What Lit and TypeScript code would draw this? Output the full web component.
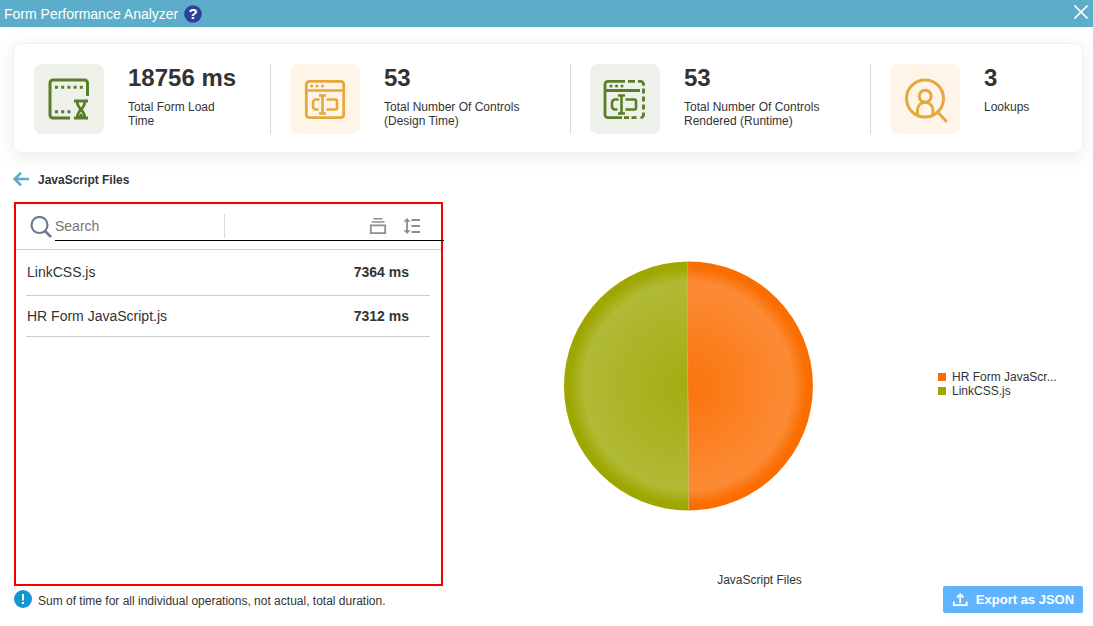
import { LitElement, html, css, svg } from "lit";
import { customElement, property, state } from "lit/decorators.js";

const textField = svg`
  <g fill="none" stroke="currentColor" stroke-width="2.6" stroke-linecap="butt" stroke-linejoin="round">
    <path d="M15.500 20.500h-3.500a3 3 0 0 0-3 3v4a3 3 0 0 0 3 3h2.500"/>
    <path d="M22.500 20.500h9a1.500 1.500 0 0 1 1.500 1.500v7a1.500 1.500 0 0 1-1.500 1.500h-9"/>
    <path d="M15 16.500h7M15 34.500h7M18.500 16.500v18"/>
  </g>`;

const icons = {
  load: svg`
    <path d="M22 40H5a3 3 0 0 1-3-3V5a3 3 0 0 1 3-3h31.500a3 3 0 0 1 3 3v13" fill="none" stroke="currentColor" stroke-width="3" stroke-linecap="butt"/>
    <path d="M7 9.200H35" stroke="currentColor" stroke-width="3" stroke-dasharray="3 3.200"/>
    <path d="M7 33.700H23" stroke="currentColor" stroke-width="3" stroke-dasharray="3 3.200"/>
    <path d="M26 23h14M26 40h14M29 23c0 5 3 6.500 3.500 8.500-.5 2-3.500 3.500-3.500 8.500M37 23c0 5-3 6.500-3.500 8.500 .5 2 3.500 3.500 3.500 8.500" fill="none" stroke="currentColor" stroke-width="2.800"/>
    <path d="M29 40l4-5 4 5z" fill="currentColor"/>`,
  design: svg`
    <rect x="2.300" y="3.300" width="37.400" height="36.400" rx="3" fill="none" stroke="currentColor" stroke-width="2.800"/>
    <path d="M2 12.500h37" stroke="currentColor" stroke-width="2.600"/>
    <g fill="currentColor"><circle cx="7.700" cy="8" r="1.600"/><circle cx="13" cy="8" r="1.600"/><circle cx="18.500" cy="8" r="1.600"/></g>
    <g transform="translate(0 1)">${textField}</g>`,
  runtime: svg`
    <path d="M21 3.300H4a3 3 0 0 0-3 3v30.400a3 3 0 0 0 3 3h14M1 12.500h35" fill="none" stroke="currentColor" stroke-width="2.800"/>
    <path d="M24 3.300h7M34 3.300h2.500a3 3 0 0 1 3 3v1.500M39.500 10.500v5M39.500 18.500v5M39.500 26.500v5M39.500 34.500v2.200a3 3 0 0 1-3 3M32.500 39.700h-5M25 39.700h-5" fill="none" stroke="currentColor" stroke-width="2.800"/>
    <g fill="currentColor"><circle cx="7" cy="8" r="1.600"/><circle cx="12.500" cy="8" r="1.600"/><circle cx="18" cy="8" r="1.600"/></g>
    <g transform="translate(-1 1)">${textField}</g>`,
  lookup: svg`
    <g fill="none" stroke="currentColor" stroke-width="3" stroke-linecap="round">
      <circle cx="21" cy="20.500" r="18.500"/>
      <circle cx="21.200" cy="18.200" r="6"/>
      <path d="M13.500 36v-4a7.700 7.700 0 0 1 15.400 0v4M34.500 35l7.500 8"/>
    </g>`,
};

@customElement("metric-tile")
class MetricTile extends LitElement {
  @property() icon: keyof typeof icons = "load";
  @property() value = "";
  @property() label = "";
  @property() tone = "green";

  static styles = css`
    :host { display: block; }
    .tile { display: flex; gap: 24px; height: 70px; }
    .icon { flex: none; width: 70px; height: 70px; border-radius: 8px; display: grid; place-items: center; }
    .green { background: #eef1ea; color: #5a7d2a; }
    .amber { background: #fff4e8; color: #e3a93c; }
    .icon svg { width: 42px; height: 42px; overflow: visible; }
    .value { font-size: 24px; line-height: 28px; font-weight: 700; color: #333; margin: 0 0 8px; }
    .label { font-size: 12px; line-height: 14px; color: #333; margin: 0; }
  `;

  render() {
    return html`<div class="tile">
      <div class="icon ${this.tone}"><svg viewBox="0 0 42 42" aria-hidden="true">${icons[this.icon]}</svg></div>
      <div><p class="value">${this.value}</p><p class="label">${this.label}</p></div>
    </div>`;
  }
}

@customElement("app-root")
class AppRoot extends LitElement {
  @state() private query = "";

  private metrics = [
    { icon: "load", tone: "green", value: "18756 ms", label: "Total Form Load Time" },
    { icon: "design", tone: "amber", value: "53", label: "Total Number Of Controls (Design Time)" },
    { icon: "runtime", tone: "green", value: "53", label: "Total Number Of Controls Rendered (Runtime)" },
    { icon: "lookup", tone: "amber", value: "3", label: "Lookups" },
  ];

  private files = [
    { name: "LinkCSS.js", time: 7364 },
    { name: "HR Form JavaScript.js", time: 7312 },
  ];

  static styles = css`
    :host { display: flex; flex-direction: column; min-height: 100vh; background: #fff; color: #333; font: 12px/14px "Liberation Sans", Arial, sans-serif; }
    * { box-sizing: border-box; }
    button { font: inherit; color: inherit; border: 0; padding: 0; background: none; cursor: pointer; display: flex; align-items: center; }
    svg { display: block; flex: none; }
    .bar { height: 27px; background: #5badc9; color: #fff; display: flex; align-items: center; gap: 6px; padding: 0 5px 0 4px; }
    .title { font-size: 14px; line-height: 16px; font-weight: 400; margin: 0; }
    .close { margin-left: auto; padding-bottom: 3px; }
    .mark { font: 700 15px/18px "Liberation Sans", Arial, sans-serif; fill: #fff; text-anchor: middle; }
    .card { margin: 16px 10px 0 13px; padding: 20px 20px 18px; border: 1px solid #f0f0f0; border-radius: 8px; box-shadow: 0 4px 20px rgba(0, 0, 0, 0.08); display: grid; grid-template-columns: 256fr 300fr 300fr 172fr; }
    .cell { border-right: 1px solid #d6d8db; margin-right: 19px; padding-right: 30px; }
    .cell:last-child { border: 0; margin: 0; padding: 0; }
    .crumb { display: flex; align-items: center; gap: 8px; padding: 0 13px; margin: 19px 0 14px; height: 16px; }
    .crumb h2 { font-size: 12px; line-height: 16px; margin: 0; }
    .main { flex: 1; display: grid; grid-template-columns: 429fr 640fr; padding: 0 10px 0 14px; }
    .panel { border: 2px solid #f60000; min-width: 0; }
    .search { display: flex; align-items: center; height: 46px; border-bottom: 1px solid #c8ccd1; padding-left: 14px; }
    .tools { position: relative; flex: 1; margin-right: -3px; height: 28px; display: flex; align-items: center; border-bottom: 1px solid #000; margin-left: 3px; }
    .tools input { font: 14px/16px "Liberation Sans", Arial, sans-serif; color: #333; width: 170px; height: 24px; border: 0; border-right: 1px solid #d6d9de; outline: 0; padding: 0; background: none; }
    .tools input::placeholder { color: #757575; opacity: 1; }
    .icons { margin-left: auto; display: flex; gap: 16px; padding-right: 23px; color: #8d8d8d; }
    table { width: calc(100% - 21px); margin: 0 11px 0 10px; border-collapse: collapse; font-size: 14px; line-height: 16px; }
    td { border-bottom: 1px solid #c8ccd1; padding: 12px 0 12px 1px; }
    tr:first-child td { padding-top: 14px; padding-bottom: 15px; }
    .time { text-align: right; font-weight: 700; padding-right: 21px; }
    .chart { display: grid; grid-template-columns: 1fr 150px; grid-template-rows: 1fr 16px; margin: 0; }
    .pie { place-self: center; }
    .legend { align-self: center; list-style: none; margin: 0; padding: 0 0 4px 5px; }
    .legend li { display: flex; align-items: center; gap: 6px; }
    .swatch { width: 8px; height: 8px; background: #fa6e00; }
    .olive { background: #9ea700; }
    .caption { grid-column: 1 / 3; text-align: center; padding: 4px 7px 0 0; line-height: 12px; }
    .foot { display: flex; align-items: flex-start; gap: 6px; padding: 0 10px 13px 14px; }
    .note { margin: 8px 0 0; }
    .info { margin-top: 4px; }
    .export { margin-left: auto; width: 140px; height: 27px; justify-content: center; gap: 8px; background: #60b3ff; color: #fff; border-radius: 2px; font-size: 13px; font-weight: 700; }
  `;

  private get pie() {
    return html`<svg class="pie" width="250" height="250" viewBox="0 0 250 250" role="img" aria-label="JavaScript Files">
      <defs>
        <radialGradient id="olive" gradientUnits="userSpaceOnUse" cx="125" cy="125" r="125">
          <stop offset="0" stop-color="#a3ac10"/><stop offset="0.83" stop-color="#b1ba35"/><stop offset="0.95" stop-color="#9ea700"/>
        </radialGradient>
        <radialGradient id="orange" gradientUnits="userSpaceOnUse" cx="125" cy="125" r="125">
          <stop offset="0" stop-color="#fa740c"/><stop offset="0.83" stop-color="#fc8b35"/><stop offset="0.95" stop-color="#fa6e00"/>
        </radialGradient>
      </defs>
      <path d="M125 .5A124.500 124.500 0 0 1 125.900 249.500L125 125z" fill="url(#orange)"/>
      <path d="M125 .5A124.500 124.500 0 1 0 125.900 249.500L125 125z" fill="url(#olive)"/>
      <path d="M124.700 1V125L125.600 249" fill="none" stroke="#d8b060" stroke-width=".8"/>
    </svg>`;
  }

  render() {
    const shown = this.files.filter((f) => f.name.toLowerCase().includes(this.query.toLowerCase()));
    return html`
      <header class="bar">
        <h1 class="title">Form Performance Analyzer</h1>
        <button aria-label="Help"><svg width="18" height="18" viewBox="0 0 18 18"><circle cx="9" cy="9" r="8.800" fill="#2f429b"/><text class="mark" x="9" y="14.300">?</text></svg></button>
        <button class="close" aria-label="Close"><svg width="14" height="14" viewBox="0 0 14 14"><path d="M.5 .5l13 13M13.500 .5L.5 13.500" stroke="#fff" stroke-width="1.600"/></svg></button>
      </header>
      <section class="card">
        ${this.metrics.map((m) => html`<div class="cell"><metric-tile .icon=${m.icon as any} .tone=${m.tone} .value=${m.value} .label=${m.label}></metric-tile></div>`)}
      </section>
      <nav class="crumb">
        <button aria-label="Back"><svg width="17" height="16" viewBox="0 0 17 16"><path d="M8 .8L1.700 7L8 13.200M1.700 7H16" fill="none" stroke="#5badc9" stroke-width="2.600"/></svg></button>
        <h2>JavaScript Files</h2>
      </nav>
      <main class="main">
        <section class="panel">
          <div class="search">
            <svg width="22" height="22" viewBox="0 0 22 22" aria-hidden="true"><circle cx="9.500" cy="9" r="8" fill="none" stroke="#6b7a90" stroke-width="2.200"/><path d="M15 15l6 6" stroke="#6b7a90" stroke-width="2.600"/></svg>
            <div class="tools">
              <input type="text" aria-label="Search" placeholder="Search" .value=${this.query} @input=${(e: Event) => (this.query = (e.target as HTMLInputElement).value)} />
              <div class="icons">
                <button aria-label="Group"><svg width="18" height="18" viewBox="0 0 18 18"><path d="M4.500 1.700h9M2.500 5h13" stroke="currentColor" stroke-width="1.600"/><path d="M1.800 8.300h14.400v7.900H1.800z" fill="none" stroke="currentColor" stroke-width="1.800"/></svg></button>
                <button aria-label="Sort"><svg width="18" height="18" viewBox="0 0 18 18"><path d="M8.500 3H17M8.500 9H17M8.500 15H17M4 3v12" stroke="currentColor" stroke-width="1.800"/><path d="M.5 4.800L4 1l3.500 3.800zM.5 13.200L4 17l3.500-3.800z" fill="currentColor"/></svg></button>
              </div>
            </div>
          </div>
          <table>
            <tbody>${shown.map((f) => html`<tr><td>${f.name}</td><td class="time">${f.time} ms</td></tr>`)}</tbody>
          </table>
        </section>
        <figure class="chart">
          ${this.pie}
          <ul class="legend">
            <li><span class="swatch"></span>HR Form JavaScr...</li>
            <li><span class="swatch olive"></span>LinkCSS.js</li>
          </ul>
          <figcaption class="caption">JavaScript Files</figcaption>
        </figure>
      </main>
      <footer class="foot">
        <svg class="info" width="18" height="18" viewBox="0 0 18 18" aria-hidden="true"><circle cx="9" cy="9" r="9" fill="#1296cf"/><path d="M9 4v6.500M9 12v2" stroke="#fff" stroke-width="2"/></svg>
        <p class="note">Sum of time for all individual operations, not actual, total duration.</p>
        <button class="export"><svg width="16" height="16" viewBox="0 0 16 16" aria-hidden="true"><path d="M1.800 9.500V13.200h12.900V9.500M8.200 11V3M5 5.500L8.200 2.200l3.200 3.300" fill="none" stroke="#fff" stroke-width="1.800"/></svg>Export as JSON</button>
      </footer>`;
  }
}
